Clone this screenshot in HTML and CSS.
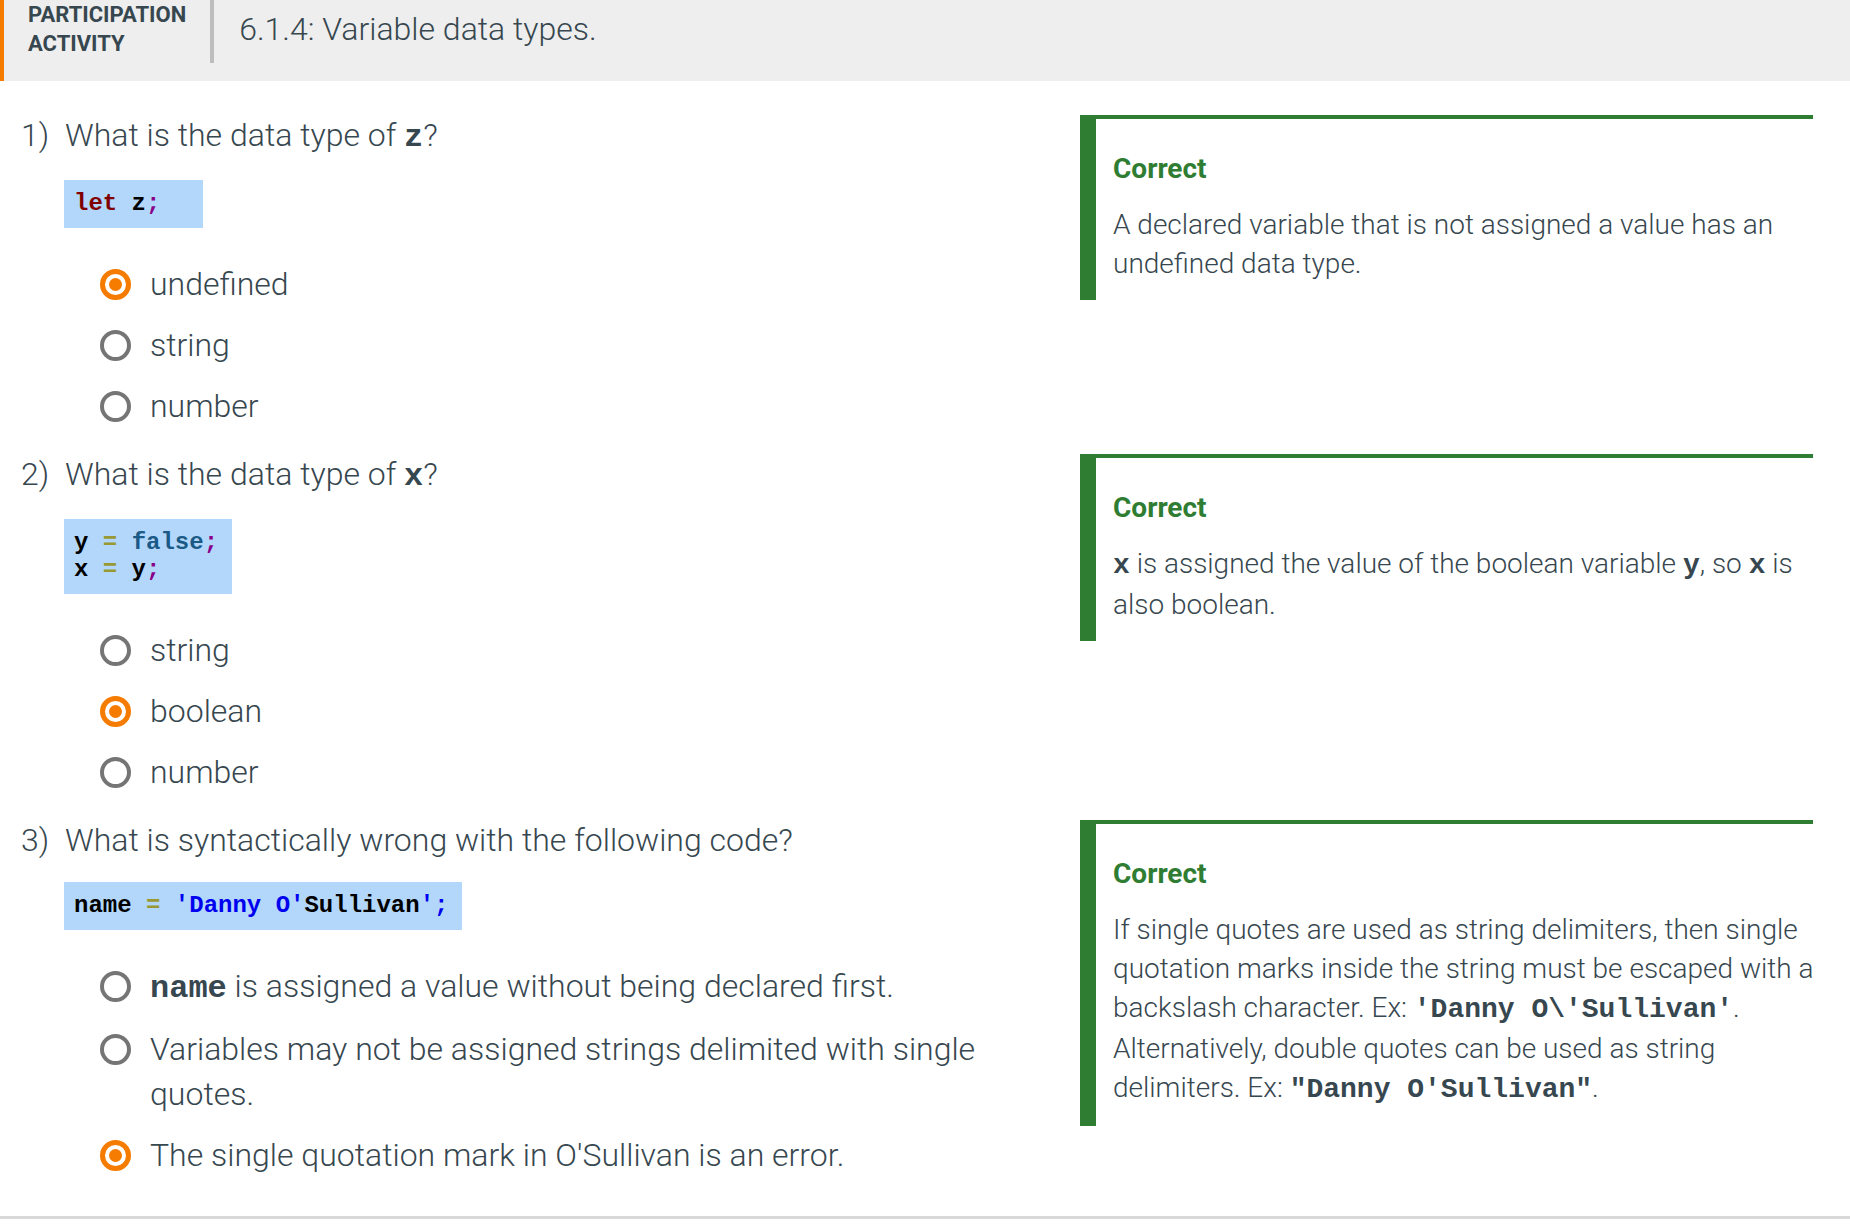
FILE: index.html
```html
<!DOCTYPE html>
<html lang="en">
<head>
<meta charset="utf-8">
<title>6.1.4: Variable data types.</title>
<link rel="stylesheet" href="styles.css">
</head>
<body>
<div class="card">
  <header class="activity-header">
    <div class="label">PARTICIPATION<br>ACTIVITY</div>
    <div class="sep"></div>
    <h1 class="title">6.1.4: Variable data types.</h1>
  </header>

  <div class="questions">
    <div class="question">
      <div class="q-main">
        <div class="q-title"><span class="q-num">1)</span><span class="q-text">What is the data type of <code class="inline">z</code>?</span></div>
        <div class="q-body">
          <pre class="code"><span class="kw">let</span> z<span class="pu">;</span>  </pre>
          <ul class="options">
            <li class="option selected"><span class="radio"></span><span class="opt-text">undefined</span></li>
            <li class="option"><span class="radio"></span><span class="opt-text">string</span></li>
            <li class="option"><span class="radio"></span><span class="opt-text">number</span></li>
          </ul>
        </div>
      </div>
      <div class="feedback">
        <div class="fb-title">Correct</div>
        <div class="fb-text">A declared variable that is not assigned a value has an undefined data type.</div>
      </div>
    </div>

    <div class="question">
      <div class="q-main">
        <div class="q-title"><span class="q-num">2)</span><span class="q-text">What is the data type of <code class="inline">x</code>?</span></div>
        <div class="q-body">
          <pre class="code">y <span class="op">=</span> <span class="lit">false</span><span class="pu">;</span>
x <span class="op">=</span> y<span class="pu">;</span></pre>
          <ul class="options">
            <li class="option"><span class="radio"></span><span class="opt-text">string</span></li>
            <li class="option selected"><span class="radio"></span><span class="opt-text">boolean</span></li>
            <li class="option"><span class="radio"></span><span class="opt-text">number</span></li>
          </ul>
        </div>
      </div>
      <div class="feedback">
        <div class="fb-title">Correct</div>
        <div class="fb-text"><code class="inline">x</code> is assigned the value of the boolean variable <code class="inline">y</code>, so <code class="inline">x</code> is also boolean.</div>
      </div>
    </div>

    <div class="question">
      <div class="q-main">
        <div class="q-title"><span class="q-num">3)</span><span class="q-text">What is syntactically wrong with the following code?</span></div>
        <div class="q-body">
          <pre class="code">name <span class="op">=</span> <span class="str">'Danny O'</span>Sullivan<span class="str">';</span></pre>
          <ul class="options">
            <li class="option"><span class="radio"></span><span class="opt-text"><code class="inline">name</code> is assigned a value without being declared first.</span></li>
            <li class="option"><span class="radio"></span><span class="opt-text">Variables may not be assigned strings delimited with single quotes.</span></li>
            <li class="option selected"><span class="radio"></span><span class="opt-text">The single quotation mark in O'Sullivan is an error.</span></li>
          </ul>
        </div>
      </div>
      <div class="feedback">
        <div class="fb-title">Correct</div>
        <div class="fb-text">If single quotes are used as string delimiters, then single quotation marks inside the string must be escaped with a backslash character. Ex: <code class="inline">'Danny O\'Sullivan'</code>. Alternatively, double quotes can be used as string delimiters. Ex: <code class="inline">"Danny O'Sullivan"</code>.</div>
      </div>
    </div>
  </div>
</div>
</body>
</html>
```

FILE: styles.css
```css
html, body {
  margin: 0;
  padding: 0;
  background: #ffffff;
}

body {
  font-family: Roboto, "Noto Sans", "Liberation Sans", sans-serif;
  font-weight: 300;
  color: #37474f;
}

.card {
  background: #ffffff;
  border-bottom: 3px solid #d9d9d9;
  box-shadow: 0 3px 6px rgba(0, 0, 0, 0.08);
}

/* Header */
.activity-header {
  display: flex;
  align-items: flex-start;
  height: 81px;
  background: #eeeeee;
  border-left: 4px solid #f57c00;
  box-sizing: border-box;
}

.label {
  padding-left: 24px;
  font-size: 22px;
  line-height: 29px;
  font-weight: 700;
  color: #37474f;
}

.sep {
  width: 4px;
  height: 63px;
  margin-left: 24px;
  background: #bdbdbd;
}

.title {
  margin: 0 0 0 25px;
  padding-top: 7px;
  font-size: 32px;
  line-height: 44px;
  font-weight: 300;
  color: #37474f;
}

/* Questions */
.questions {
  padding: 34px 37px 38px 21px;
}

.question {
  display: flex;
  align-items: flex-start;
  gap: 30px;
  margin-bottom: 25px;
}

.question:last-child {
  margin-bottom: 0;
}

.q-main {
  flex: 1;
  min-width: 0;
}

.q-title {
  display: flex;
  font-size: 32px;
  line-height: 40px;
}

.q-num {
  width: 44px;
  flex: none;
}

.q-body {
  margin-left: 43px;
}

.code {
  display: inline-block;
  margin: 22px 0 0 0;
  padding: 10px 14px 11px 10px;
  background: #b3d7fb;
  font-family: "Liberation Mono", "DejaVu Sans Mono", monospace;
  font-weight: 700;
  font-size: 24px;
  line-height: 27px;
  color: #000000;
  vertical-align: top;
}

.code .kw { color: #800000; }
.code .pu { color: #880088; }
.code .op { color: #999933; }
.code .lit { color: #1b5a86; }
.code .str { color: #0000f0; }

.inline {
  font-family: "Liberation Mono", "DejaVu Sans Mono", monospace;
  font-weight: 700;
  font-size: 1em;
  color: #37474f;
}

.options {
  list-style: none;
  margin: 34px 0 0 36px;
  padding: 0;
}

.option {
  display: flex;
  align-items: flex-start;
  margin-bottom: 16px;
  font-size: 32px;
  line-height: 45px;
}

.option:last-child {
  margin-bottom: 0;
}

.radio {
  flex: none;
  position: relative;
  width: 31px;
  height: 31px;
  margin-top: 7px;
  margin-right: 19px;
  box-sizing: border-box;
  border: 4px solid #757575;
  border-radius: 50%;
}

.option.selected .radio {
  border: 5px solid #f57c00;
}

.option.selected .radio::after {
  content: "";
  position: absolute;
  left: 50%;
  top: 50%;
  width: 13px;
  height: 13px;
  margin: -6.5px 0 0 -6.5px;
  border-radius: 50%;
  background: #f57c00;
}

.opt-text {
  flex: 1;
}

/* Feedback */
.feedback {
  flex: none;
  width: 733px;
  box-sizing: border-box;
  border-top: 4px solid #2e7d32;
  border-left: 16px solid #2e7d32;
  padding: 30px 0 17px 17px;
}

.fb-title {
  font-size: 28px;
  line-height: 40px;
  font-weight: 700;
  color: #2e7d32;
}

.fb-text {
  margin-top: 16px;
  margin-right: -8px;
  font-size: 28px;
  line-height: 39px;
}
```
